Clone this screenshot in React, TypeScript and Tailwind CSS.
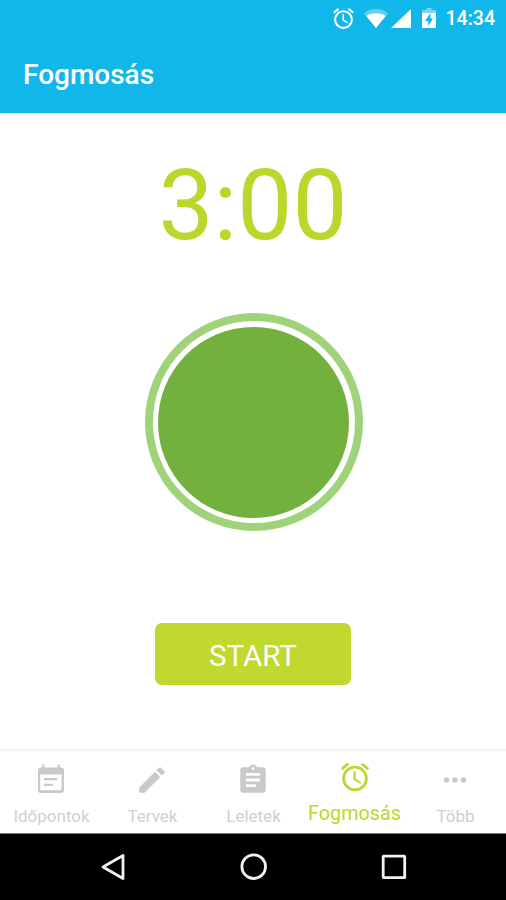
import { MdAlarm, MdAssignment, MdEdit, MdMoreHoriz } from 'react-icons/md';
import type { ComponentType } from 'react';

interface Tab {
  label: string;
  icon: ComponentType<{ className?: string }>;
  active?: boolean;
}

function CalendarIcon({ className }: { className?: string }) {
  return (
    <svg className={className} viewBox="0 0 34 34" fill="currentColor">
      <path d="M8.2 1.6h2.2v3h13.2v-3h2.2v3h1.2a3 3 0 0 1 3 3V27a3 3 0 0 1-3 3h-20a3 3 0 0 1-3-3V7.6a3 3 0 0 1 3-3h1.2zM6.2 11.4V26c0 .9.4 1.3 1.3 1.3h18.8c.9 0 1.3-.4 1.3-1.3V11.4z" />
      <path d="M10 15h13.5v2.2H10zM10 20.7h9v2.2h-9z" />
    </svg>
  );
}

const TABS: Tab[] = [
  { label: 'Időpontok', icon: CalendarIcon },
  { label: 'Tervek', icon: MdEdit },
  { label: 'Leletek', icon: MdAssignment },
  { label: 'Fogmosás', icon: MdAlarm, active: true },
  { label: 'Több', icon: MdMoreHoriz },
];

function StatusBar() {
  return (
    <div className="flex h-9 items-center justify-end pr-[11px] text-white">
      <MdAlarm className="h-[25px] w-[25px]" />
      <svg className="ml-2 h-[19px] w-6" viewBox="0 0 24 19" fill="currentColor">
        <path d="M12 19 0 4.2C3.4 1.5 7.5 0 12 0s8.6 1.5 12 4.2z" opacity="0.35" />
        <path d="M12 19 2.2 7C5 5.2 8.5 4.3 12 4.3s7 .9 9.8 2.7z" />
      </svg>
      <svg className="ml-[3px] h-[19px] w-5" viewBox="0 0 20 19" fill="currentColor">
        <path d="M0 19 20 0v19z" />
      </svg>
      <svg className="ml-[11px] h-5 w-[14px]" viewBox="0 0 14 20">
        <path d="M4.5 0h5v2H13a1 1 0 0 1 1 1v4H0V3a1 1 0 0 1 1-1h3.5z" fill="#fff" opacity="0.45" />
        <path d="M0 5h14v14a1 1 0 0 1-1 1H1a1 1 0 0 1-1-1z" fill="#fff" />
        <path d="M8.5 5 3 13h3.2v5L11 10.5H8.5z" fill="#12b7ea" />
      </svg>
      <span className="ml-[10px] pt-px text-[19.5px] leading-none font-medium">14:34</span>
    </div>
  );
}

function TabBar() {
  return (
    <nav className="grid h-[84px] grid-cols-5 border-t-2 border-[#f3f3f3] bg-white pl-px">
      {TABS.map(({ label, icon: Icon, active }) => (
        <button
          key={label}
          className={`flex flex-col items-center whitespace-nowrap ${
            active ? 'pt-[9px] text-[#bdd62c]' : 'pt-[11.5px] text-[#c9c9c9]'
          }`}
        >
          <Icon className={active ? 'h-[34px] w-[34px] shrink-0' : 'mr-px h-[34px] w-[34px] shrink-0'} />
          <span
            className={
              active ? 'mt-2 text-[19.8px] leading-6' : 'mt-[7.5px] text-[17px] leading-6 text-[#d0d0d0]'
            }
          >
            {label}
          </span>
        </button>
      ))}
    </nav>
  );
}

function SystemNav() {
  return (
    <div className="flex h-[67px] items-center justify-between border-t border-[#777] bg-black pr-[98px] pl-[99px] text-[#f2f2f2]">
      <svg className="h-7 w-7" viewBox="0 0 28 28" fill="none" stroke="currentColor" strokeWidth="2.8">
        <path d="M24 2.5v23L4 14z" strokeLinejoin="round" />
      </svg>
      <svg className="h-7 w-7" viewBox="0 0 28 28" fill="none" stroke="currentColor" strokeWidth="2.8">
        <circle cx="13.7" cy="13.7" r="11.8" />
      </svg>
      <svg className="h-7 w-7" viewBox="0 0 28 28" fill="none" stroke="currentColor" strokeWidth="2.8">
        <rect x="3.2" y="3.2" width="21.5" height="21.5" rx="0.5" />
      </svg>
    </div>
  );
}

export default function App() {
  return (
    <div className="flex h-[900px] w-[506px] flex-col overflow-hidden bg-white font-[Roboto,sans-serif]">
      <header className="h-[113px] bg-[#12b7ea]">
        <StatusBar />
        <h1 className="pt-[21px] pl-[23px] text-[28px] leading-9 font-medium text-white">Fogmosás</h1>
      </header>

      <main className="flex flex-1 flex-col items-center">
        <div className="mt-[43px] text-[98px] leading-[100px] text-[#bdd62c]">3:00</div>
        <div className="mt-[57px] ml-px h-[218px] w-[218px] rounded-full border-[8px] border-[#9fd37a] p-[5.5px]">
          <div className="h-full w-full rounded-full bg-[#72b13d]" />
        </div>
        <button className="mt-[92px] h-[62px] w-[196px] rounded-[7px] bg-[#c1d82f] pt-1 text-[29.5px] text-white">
          START
        </button>
      </main>

      <TabBar />
      <SystemNav />
    </div>
  );
}
